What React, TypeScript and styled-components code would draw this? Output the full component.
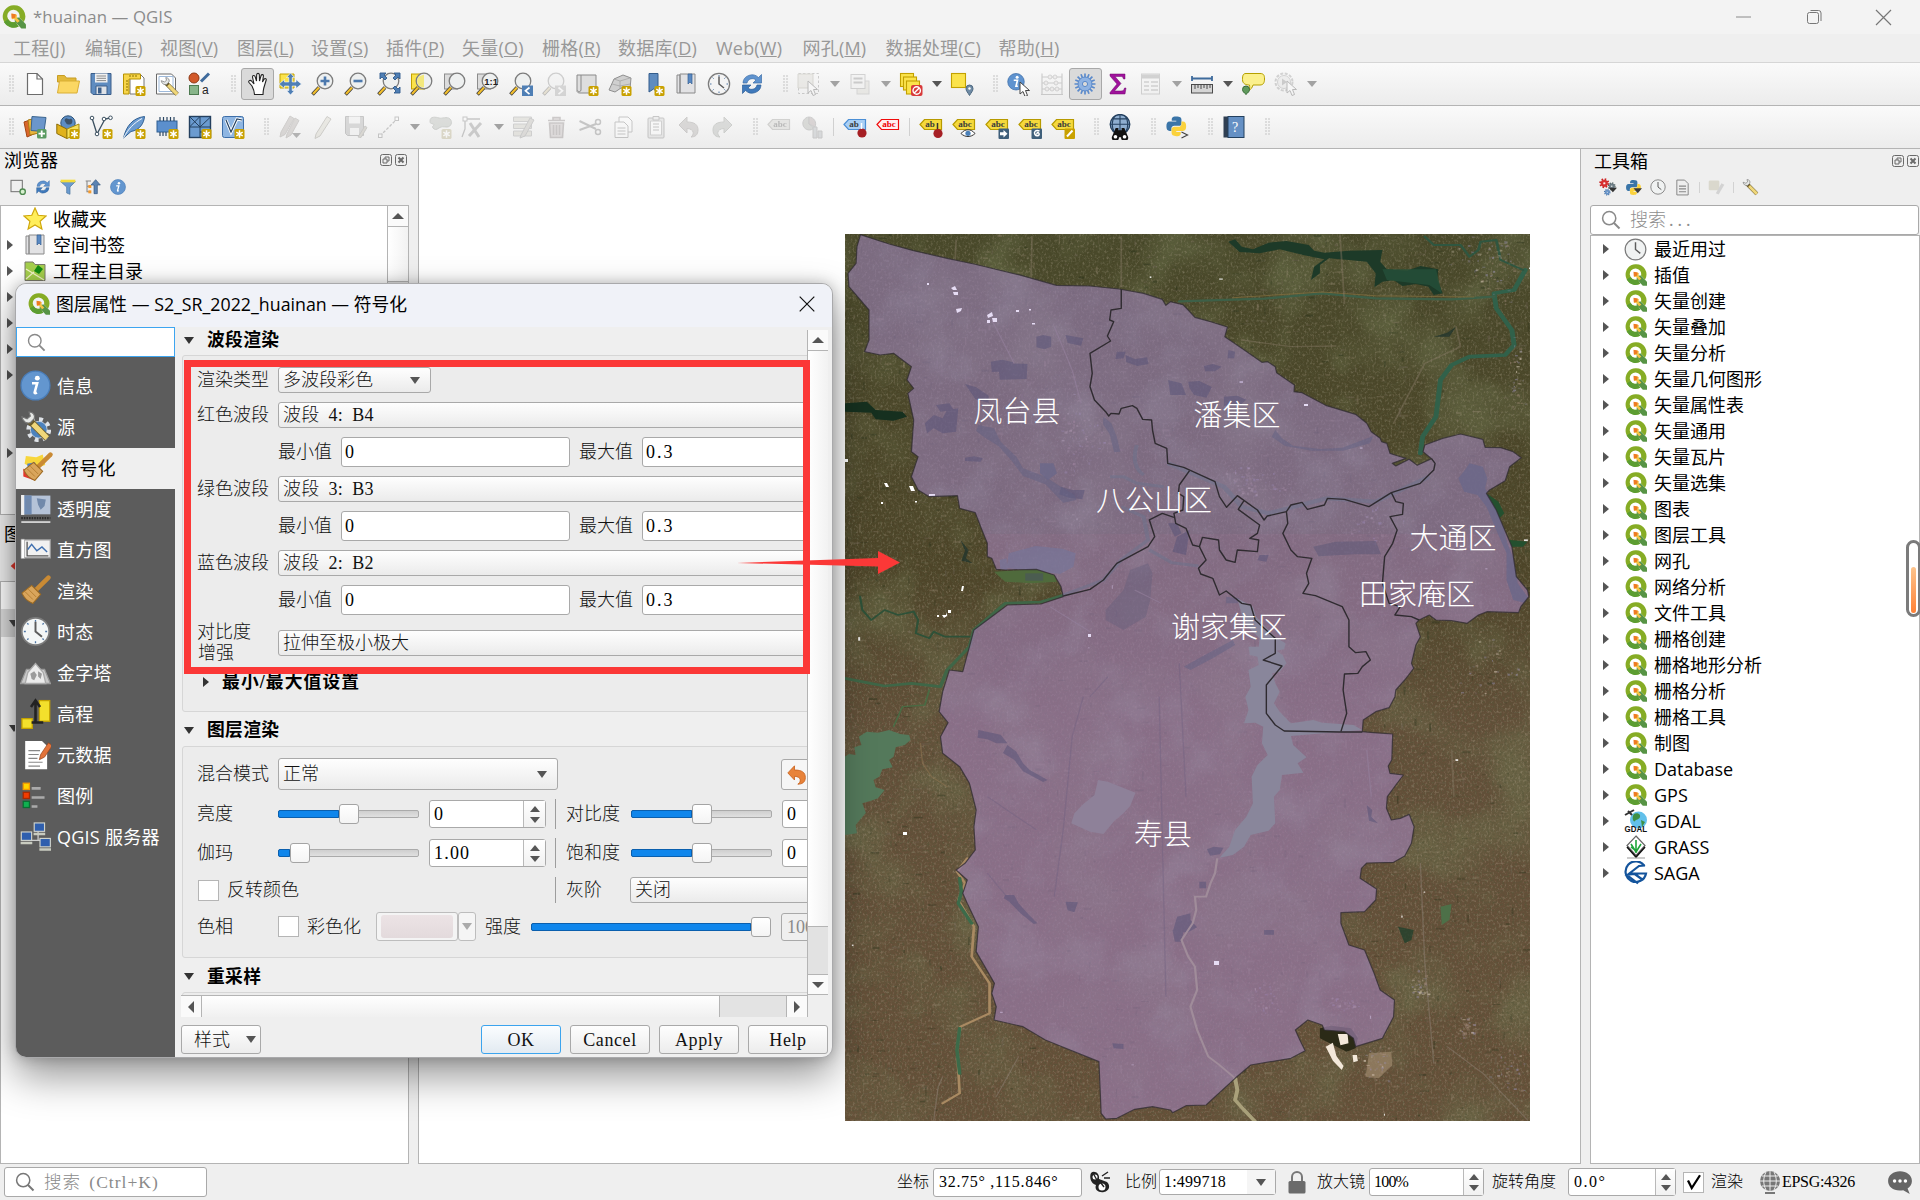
import React from 'react';
import styled, { createGlobalStyle } from 'styled-components';

const SANS = '"Open Sans", "Noto Sans CJK SC", sans-serif';
const SERIF = '"Liberation Serif", "Noto Sans CJK SC", serif';

const Global = createGlobalStyle`
  * { box-sizing: border-box; }
  html, body { margin: 0; padding: 0; }
  body { width: 1920px; height: 1200px; overflow: hidden; background: #efefef; }
`;

/* ---------- shell ---------- */
const Window = styled.div`
  position: relative; width: 1920px; height: 1200px; overflow: hidden;
  display: flex; flex-direction: column; background: #efefef;
  font: 18px/26px ${SANS}; color: #000; white-space: nowrap;
`;
const TitleBar = styled.header`
  height: 34px; flex: none; display: flex; align-items: center; gap: 6px; padding-left: 1px;
  background: #f3f3f3; color: #8b8b8b; font-size: 16.8px;
`;
const TitleText = styled.span`flex: 1; letter-spacing: 0.1px;`;
const WinButtons = styled.div`display: flex; gap: 48px; padding-right: 25px; svg { display: block; }`;
const MenuBar = styled.nav`
  height: 29px; flex: none; display: flex; align-items: center; padding-left: 13px;
  border-bottom: 1px solid #d6d6d6; background: #efefef; color: #989898; font-size: 18px;
`;
const MenuItem = styled.span<{ $w: number }>`width: ${p => p.$w}px; letter-spacing: 0.2px;`;
const ToolBar = styled.div`
  height: 43px; flex: none; display: flex; align-items: center; padding-right: 10px;
  border-bottom: 1px solid #b4b4b4; background: linear-gradient(#fafafa, #ececec);
`;
const ToolRow = styled.div`display: flex; align-items: center; margin-left: -5.5px;`;
const Slot = styled.div<{ $on?: boolean; $dim?: boolean }>`
  width: 33px; height: 32px; display: flex; align-items: center; justify-content: center;
  border-radius: 3px; border: 1px solid ${p => (p.$on ? '#a8a8a8' : 'transparent')};
  background: ${p => (p.$on ? '#dadada' : 'transparent')};
  svg { display: block; opacity: ${p => (p.$dim ? 0.32 : 1)}; filter: ${p => (p.$dim ? 'grayscale(.7)' : 'none')}; }
`;
const Drop = styled.div<{ $dim?: boolean }>`
  width: 18px; display: flex; justify-content: center;
  &::after { content: ''; border: 5.5px solid transparent; border-top: 6px solid ${p => (p.$dim ? '#a2a2a2' : '#555')}; border-bottom: 0; }
`;
const Grip = styled.div`
  width: 24px; padding-left: 14px;
  &::after { content: ''; display: block; width: 5px; height: 18px;
    background: radial-gradient(circle at 1px 1px, #cfcfcf 0.6px, transparent 0.9px) 0 0 / 3px 3px; }
`;
const Sep = styled.div`width: 10px; display: flex; justify-content: center; &::after { content: ''; width: 1px; height: 18px; background: #d0d0d0; }`;

/* ---------- docks ---------- */
const Main = styled.main`height: 1015px; flex: none; display: flex;`;
const LeftDock = styled.aside`width: 418px; padding-right: 9px; display: flex; flex-direction: column;`;
const Canvas = styled.section`
  width: 1163px; padding: 85px 0 0 426px; background: #fff;
  border-left: 1px solid #b4b4b4; border-right: 1px solid #b4b4b4; border-bottom: 1px solid #b4b4b4;
`;
const RightDock = styled.aside`flex: 1; padding-left: 9px; display: flex; flex-direction: column;`;
const DockTitle = styled.div<{ $h?: number; $pl?: number; $pr?: number }>`
  height: ${p => p.$h ?? 24}px; display: flex; align-items: center; justify-content: space-between;
  padding: 0 ${p => p.$pr ?? 1}px 0 ${p => p.$pl ?? 4}px; svg { display: block; }
`;
const DockTools = styled.div<{ $pl: number; $h: number; $gap?: number }>`
  height: ${p => p.$h}px; display: flex; align-items: center; gap: ${p => p.$gap ?? 9}px; padding: 0 0 3px ${p => p.$pl}px; svg { display: block; }
`;
const Thin = styled.i`width: 1px; height: 11px; background: #d2d2d2;`;
const BrowserTree = styled.div`
  height: 310px; flex: none; display: flex; background: #fff; border: 1px solid #b4b4b4;
`;
const LayerTree = styled.div`flex: 1; background: #fff; border: 1px solid #b4b4b4; padding-top: 27px;`;
const LayerRow = styled.div<{ $sel?: boolean; $mt?: number }>`
  height: 28px; margin-top: ${p => p.$mt ?? 0}px; display: flex; align-items: center; padding-left: 8px; background: ${p => (p.$sel ? '#dcdcdc' : 'none')};
`;
const Rows = styled.div`flex: 1;`;
const TreeRow = styled.div<{ $pl: number }>`
  height: 26px; display: grid; align-items: center; padding-left: ${p => p.$pl}px;
  grid-template-columns: 16px 30px 1fr; svg { display: block; }
`;
const ToolTreeRow = styled(TreeRow)`grid-template-columns: 15px 24px 1fr; column-gap: 6px;`;
const Tri = styled.i<{ $down?: boolean; $c?: string }>`
  display: block; width: 0; height: 0; border: 5.5px solid transparent;
  ${p => (p.$down ? `border-top: 7px solid ${p.$c ?? '#444'}; border-bottom: 0;` : `border-left: 6px solid ${p.$c ?? '#555'}; border-right: 0;`)}
`;
const ToolSearch = styled.div`
  height: 30px; flex: none; margin-right: 1px; display: flex; align-items: center; gap: 9px; padding: 0 0 1px 10px; color: #8e8e8e;
  border: 1px solid #a9a9a9; border-radius: 3px; background: #fff; font-weight: 300; font-family: ${SERIF}; svg { display: block; }
`;
const ToolTree = styled.div`flex: 1; background: #fff; border: 1px solid #b4b4b4;`;
const Meter = styled.div`
  position: absolute; left: 1906px; top: 540px; width: 15px; height: 77px; border: 3px solid #7b7b7b; border-radius: 8px;
  background: #fff; display: flex; justify-content: center; align-items: flex-end; padding-bottom: 1px;
  &::after { content: ''; width: 5px; height: 46px; border-radius: 3px; background: linear-gradient(#fdc48c, #ff8136); }
`;

/* ---------- shared scroll bars ---------- */
const VBar = styled.div<{ $w: number }>`
  width: ${p => p.$w}px; flex: none; display: flex; flex-direction: column; border-left: 1px solid #b4b4b4; background: #e2e2e2;
`;
const BarEnd = styled.div<{ $h?: number; $w?: number; $dir: 'up' | 'down' | 'left' | 'right' }>`
  height: ${p => p.$h ?? 21}px; width: ${p => (p.$w ? p.$w + 'px' : 'auto')}; flex: none; display: flex; align-items: center; justify-content: center; background: #fafafa;
  ${p => p.$dir === 'up' && 'border-bottom: 1px solid #b4b4b4;'}
  ${p => p.$dir === 'down' && 'border-top: 1px solid #b4b4b4; border-bottom: 1px solid #b4b4b4;'}
  ${p => p.$dir === 'left' && 'border-right: 1px solid #b4b4b4;'}
  ${p => p.$dir === 'right' && 'border-left: 1px solid #b4b4b4; border-right: 1px solid #b4b4b4;'}
  &::after { content: ''; border: 6px solid transparent;
    ${p => p.$dir === 'up' && 'border-top: 0; border-bottom-color: #555;'}
    ${p => p.$dir === 'down' && 'border-bottom: 0; border-top-color: #555;'}
    ${p => p.$dir === 'left' && 'border-left: 0; border-right-color: #555;'}
    ${p => p.$dir === 'right' && 'border-right: 0; border-left-color: #555;'} }
`;
const VThumb = styled.div<{ $h: number }>`height: ${p => p.$h}px; background: linear-gradient(90deg, #fff, #f2f2f2); border-bottom: 1px solid #b4b4b4;`;

/* ---------- dialog ---------- */
const Dialog = styled.div`
  position: absolute; left: 15px; top: 283px; width: 818px; height: 775px; border: 1px solid #a9a9ab; border-radius: 11px;
  overflow: hidden; background: #efefef; box-shadow: 0 18px 40px rgba(0,0,0,.42), 0 0 14px rgba(0,0,0,.22);
  display: flex; flex-direction: column;
`;
const DlgTitle = styled.div`
  height: 43px; flex: none; display: flex; align-items: center; padding: 0 17px 3px 11px; gap: 5px; background: #f0f2f8;
  svg { display: block; } span { flex: 1; font-size: 17.8px; padding-bottom: 1px; }
`;
const DlgBody = styled.div`flex: 1; display: flex; min-height: 0;`;
const Side = styled.div`width: 159px; flex: none; background: #5c5c5c; color: #fff;`;
const SideSearch = styled.div`height: 30px; border: 1px solid #3da5f0; background: #fff; padding: 5px 0 0 10px; margin-bottom: 9px; svg { display: block; }`;
const SideItem = styled.div<{ $sel?: boolean }>`
  height: 41px; display: flex; align-items: center; gap: ${p => (p.$sel ? 8 : 6)}px; padding: 0 0 2px ${p => (p.$sel ? 6 : 4)}px;
  background: ${p => (p.$sel ? '#efefef' : 'transparent')}; color: ${p => (p.$sel ? '#000' : '#fff')}; svg { display: block; }
  font-size: 18px; letter-spacing: 0.25px;
`;
const Right = styled.div`flex: 1; min-width: 0; display: flex; flex-direction: column; padding: 3px 4px 0 6px; font-family: ${SERIF}; font-weight: 300; color: #111;`;
const ScrollRow = styled.div`height: 665px; flex: none; display: flex;`;
const Content = styled.div`flex: 1; overflow: hidden; margin-top: -3px;`;
const Head = styled.div<{ $h: number; $pt?: number; $pb?: number; $pl?: number; $ls?: number }>`
  height: ${p => p.$h}px; padding: ${p => p.$pt ?? 0}px 0 ${p => p.$pb ?? 0}px ${p => p.$pl ?? 3}px; display: flex; align-items: center; gap: 13px;
  font-weight: 700; font-size: 17.8px; letter-spacing: ${p => p.$ls ?? 0.3}px; color: #000;
`;
const Group = styled.div<{ $h: number; $pt: number }>`
  width: 900px; height: ${p => p.$h}px; margin-left: 1px; padding: ${p => p.$pt}px 0 0 15px; border: 1px solid #d6d6d6; border-radius: 3px; background: #ececec;
`;
const Line = styled.div<{ $h: number; $mt?: number }>`
  height: ${p => p.$h}px; margin-top: ${p => p.$mt ?? 0}px; display: flex; align-items: center;
`;
const Label = styled.span<{ $w: number; $pl?: number; $two?: boolean }>`
  width: ${p => p.$w}px; flex: none; padding-left: ${p => p.$pl ?? 0}px; text-indent: -1px; line-height: ${p => (p.$two ? 21 : 26)}px; white-space: ${p => (p.$two ? 'pre' : 'nowrap')};
`;
const Combo = styled.div<{ $w: number; $h?: number }>`
  width: ${p => p.$w}px; height: ${p => p.$h ?? 26}px; flex: none; display: flex; align-items: center; justify-content: space-between; padding: 0 10px 0 4px;
  border: 1px solid #a9a9a9; border-radius: 3px; background: linear-gradient(#fefefe, #ebebeb);
`;
const BandText = styled.span`letter-spacing: 0.2px; word-spacing: 4.5px;`;
const Input = styled.div<{ $w: number; $h?: number; $dis?: boolean; $ls?: number; $pl?: number }>`
  width: ${p => p.$w}px; height: ${p => p.$h ?? 30}px; flex: none; display: flex; align-items: center; padding-left: ${p => p.$pl ?? 3}px; letter-spacing: ${p => p.$ls ?? 0}px;
  border: 1px solid #a9a9a9; border-radius: 3px; background: ${p => (p.$dis ? '#efefef' : '#fff')}; color: ${p => (p.$dis ? '#8a8a8a' : '#000')}; font-weight: 400;
`;
const SpinBtns = styled.div<{ $w?: number }>`
  width: ${p => p.$w ?? 22}px; height: 100%; margin-left: auto; display: flex; flex-direction: column; align-items: center; justify-content: center; gap: 5px;
  border-left: 1px solid #b9b9b9; background: linear-gradient(#fff, #f1f1f1);
  &::before { content: ''; border: 5.5px solid transparent; border-top: 0; border-bottom: 6px solid #555; }
  &::after { content: ''; border: 5.5px solid transparent; border-bottom: 0; border-top: 6px solid #555; }
`;
const Track = styled.div<{ $w: number }>`
  width: ${p => p.$w}px; height: 8px; flex: none; border: 1px solid #aaa; border-radius: 2px; background: linear-gradient(#cfcfcf, #e0e0e0); display: flex; align-items: center;
`;
const Fill = styled.div<{ $w: number }>`width: ${p => p.$w}px; height: 8px; flex: none; margin-left: -1px; background: #0f86ec; border: 1px solid #0a5fae; border-radius: 2px 0 0 2px;`;
const Knob = styled.div`width: 20px; height: 20px; flex: none; border: 1px solid #a4a4a4; border-radius: 3px; background: linear-gradient(#fff, #f4f4f4);`;
const VLine = styled.div<{ $h: number; $ml: number }>`width: 1px; height: ${p => p.$h}px; margin: 0 11px 0 ${p => p.$ml}px; background: #9d9d9d; flex: none;`;
const Check = styled.div`width: 21px; height: 21px; flex: none; border: 1px solid #b5b5b5; background: #fff; display: flex; align-items: center; justify-content: center;`;
const ColorBtn = styled.div`width: 82px; height: 29px; flex: none; padding: 2px 4px; border: 1px solid #bdbdbd; border-radius: 3px; background: #f4f4f4; &::after { content: ''; display: block; height: 23px; border-radius: 3px; background: linear-gradient(#ece3e5, #e3dadc); }`;
const ColorDrop = styled.div`width: 18px; height: 29px; flex: none; border: 1px solid #bdbdbd; border-radius: 3px; background: #f5f5f5; display: flex; align-items: center; justify-content: center;`;
const HBar = styled.div`height: 22px; width: 627px; flex: none; display: flex; border-top: 1px solid #b4b4b4; background: #e3e3e3;`;
const HThumb = styled.div`width: 518px; border-right: 1px solid #b4b4b4; background: linear-gradient(#fff, #f0f0f0);`;
const Footer = styled.div`display: flex; gap: 9px; padding-top: 8px;`;
const Btn = styled.div<{ $prim?: boolean; $first?: boolean }>`
  width: 80px; height: 29px; flex: none; display: flex; align-items: center; justify-content: ${p => (p.$first ? 'space-between' : 'center')};
  padding: ${p => (p.$first ? '0 4px 0 12px' : 0)}; font-weight: ${p => (p.$first ? 300 : 400)};
  letter-spacing: ${p => (p.$first ? 0 : 0.6)}px; margin-right: ${p => (p.$first ? 211 : 0)}px;
  border: 1px solid ${p => (p.$prim ? '#3ca4ee' : '#a9a9a9')}; border-radius: 3px; background: ${p => (p.$prim ? 'linear-gradient(#fbfdff, #e2eaf1)' : 'linear-gradient(#fefefe, #ececec)')};
`;
const UndoBtn = styled.div`width: 60px; height: 31px; flex: none; padding: 5px; border: 1px solid #a9a9a9; border-radius: 3px; background: #f6f6f6; svg { display: block; }`;

/* ---------- annotation ---------- */
const RedFrame = styled.div`position: absolute; left: 184px; top: 360px; width: 626px; height: 314px; border: 7px solid #fb3837;`;
const RedArrow = styled.svg`position: absolute; left: 737px; top: 551px; display: block;`;

/* ---------- status ---------- */
const Status = styled.footer`flex: 1; display: flex; align-items: center; padding: 0 6px 0 4px; font: 300 16px/24px ${SERIF}; svg { display: block; }`;
const Locator = styled.div`width: 203px; height: 30px; margin-right: 690px; padding-left: 10px; display: flex; align-items: center; gap: 9px; font-size: 17.5px; color: #8a8a8a; border: 1px solid #a9a9a9; border-radius: 3px; background: #fff; letter-spacing: 1px; word-spacing: 3px;`;
const SText = styled.span<{ $w: number }>`width: ${p => p.$w}px; flex: none;`;
const SIcon = styled.span<{ $w: number }>`width: ${p => p.$w}px; flex: none; display: flex; justify-content: center;`;
const SpinCombo = styled.div`width: 28px; height: 100%; margin-left: auto; display: flex; align-items: center; justify-content: center; background: #f5f5f5;`;
const Code = styled.span`letter-spacing: -0.3px; font-weight: 400;`;
const Dots = styled.span`letter-spacing: 4px; margin-left: -6px;`;
const BarGap = styled.div`flex: 1;`;

/* ---------- icons ---------- */
const S = ({ s = 24, b = 24, children }: { s?: number; b?: number; children: React.ReactNode }) => (
  <svg width={s} height={s} viewBox={`0 0 ${b} ${b}`} fill="none">{children}</svg>
);
const QLogo = ({ s = 24 }: { s?: number }) => (
  <S s={s}>
    <path d="M11.500 1.200a10.300 10.300 0 1 0 4.800 19.600l-3-4.300A5.700 5.700 0 1 1 17 12.500l4 4.200A10.300 10.300 0 0 0 11.500 1.200z" fill="#86ac25" />
    <path d="M2.600 16.500a10.300 10.300 0 0 0 13.700 4.300l-3-4.300A5.700 5.700 0 0 1 6.500 14z" fill="#5c9d31" />
    <path d="M13 12.800l3.800-.4 6.200 6.400v3.900h-4.200l-6.200-6.700z" fill="#579445" />
    <path d="M10 9l4.800 1-.3 2.800 2.800 3-2.200 1.400-3-3.400-2 .3z" fill="#f6c345" />
    <path d="M9.500 8.800l4.200.6-.6 3.400-3.300.6z" fill="#ee7a22" />
  </S>
);
const Star = () => (<g><rect x="13.500" y="14" width="10" height="10" rx="1.600" fill="#c9a100" /><path d="M18.500 15.300v7.400M15.300 17.100l6.400 3.800M21.700 17.100l-6.400 3.800" stroke="#fff" strokeWidth="1.500" /></g>);
const Mag = ({ children }: { children?: React.ReactNode }) => (
  <g><path d="M8 15.500L1.500 22.500" stroke="#3a3a3a" strokeWidth="3.600" /><path d="M8 15.500L2 22" stroke="#f2be2c" strokeWidth="2.200" />
    <circle cx="14" cy="9" r="7.800" fill="#eef0f0" stroke="#7c7c7c" strokeWidth="1.300" />{children}</g>
);
const Clock = ({ s = 24, w = '#f4f4f4' }: { s?: number; w?: string }) => (
  <S s={s}><circle cx="12" cy="12" r="10.600" fill={w} stroke="#7b7b7b" strokeWidth="1.300" /><path d="M12 3v1.500M12 19.500V21M3 12h1.500M19.500 12H21M5.600 5.600l1 1M17.400 17.400l1 1M18.400 5.600l-1 1M5.600 18.400l1-1" stroke="#4c74a4" /><path d="M12 4.500V12l5 4" stroke="#5c5c5c" strokeWidth="1.500" /></S>
);
const PlainClock = ({ s = 23 }: { s?: number }) => (
  <S s={s}><circle cx="12" cy="12" r="10.800" fill="#f0f2f2" stroke="#7b7b7b" strokeWidth="1.300" /><path d="M12 4.500V12l5 4" stroke="#5c5c5c" strokeWidth="1.500" /></S>
);
const Refresh = ({ s = 24 }: { s?: number }) => (
  <S s={s}><path d="M3 11a9 8.500 0 0 1 15.500-5.500L21.500 2.500V11H13l3-3a5.500 5.500 0 0 0-9 3z" fill="#5f93cf" stroke="#3d6ea8" strokeWidth=".7" /><path d="M21 13a9 8.500 0 0 1-15.500 5.500L2.500 21.500V13H11l-3 3a5.500 5.500 0 0 0 9-3z" fill="#3f79bb" stroke="#2d5f98" strokeWidth=".7" /></S>
);
const Info = ({ s = 24 }: { s?: number }) => (
  <S s={s}><circle cx="12" cy="12" r="11.200" fill="#6396cf" stroke="#4a7db8" /><circle cx="13.400" cy="6.300" r="1.900" fill="#fff" /><path d="M9.300 10.300h4l-2 7.200q0 1 1.800 0" stroke="#fff" strokeWidth="2" /></S>
);
const Python = ({ s = 24 }: { s?: number }) => (
  <S s={s}><path d="M12 1.500c-5 0-4.800 2-4.800 4.500H12v1H5C2.500 7 1.500 9 1.500 12s1 5 3.500 5h1.800v-2.500c0-2 1.500-3 3-3H15c1.500 0 2.500-1 2.500-2.500V5c0-2.500-1.500-3.500-5.500-3.500z" fill="#3a75a8" /><path d="M12 22.500c5 0 4.800-2 4.800-4.500H12v-1h7c2.500 0 3.500-2 3.500-5s-1-5-3.500-5h-1.500v2.500c0 2-1.500 3-3 3H10c-1.500 0-3 1-3 2.500v4c0 2.500 1.500 3.500 5 3.500z" fill="#fbd23c" /><path d="M12 13h12l-6 7z" fill="#3a3a3a" /></S>
);
const Gear = ({ cx = 12, cy = 12, r: R = 7, c = '#6c9bd2', st = '#4673a8', hole = '#dadada', teeth = 8 }: { cx?: number; cy?: number; r?: number; c?: string; st?: string; hole?: string; teeth?: number }) => {
  const step = (Math.PI * 2 * R * 1.2) / teeth;
  return (<g><circle cx={cx} cy={cy} r={R * 1.2} stroke={st} strokeWidth={R * 0.55} strokeDasharray={`${step * 0.48} ${step * 0.52}`} /><circle cx={cx} cy={cy} r={R} fill={c} stroke={st} strokeWidth=".6" /><circle cx={cx} cy={cy} r={R * 0.36} fill={hole} stroke={st} strokeWidth=".6" /></g>);
};
const Search = ({ s = 20, c = '#8a8a8a' }: { s?: number; c?: string }) => (<S s={s} b={20}><circle cx="8.200" cy="8.200" r="6.600" stroke={c} strokeWidth="1.500" /><path d="M13 13l5.500 5.500" stroke={c} strokeWidth="2" /></S>);
const Tag = ({ f = '#f5d93c', st = '#b79a00', t = 'abc', tc = '#3b3b3b', children }: { f?: string; st?: string; t?: string; tc?: string; children?: React.ReactNode }) => (
  <S><path d="M1 9.500L5.500 4.500H22.500V14.500H5.500z" fill={f} stroke={st} strokeWidth="1.200" /><text x="6.200" y="12.300" fontFamily="Liberation Serif, serif" fontWeight="700" fontSize="9" fill={tc}>{t}</text>{children}</S>
);
const Pointer = ({ x = 11, y = 9 }: { x?: number; y?: number }) => (<path transform={`translate(${x} ${y})`} d="M0 0v12l3-2.500 2 5 2.500-1-2-5h4z" fill="#fff" stroke="#444" strokeWidth="1" />);
const Broom = () => (<g><path d="M22 2l-9 9" stroke="#c98a34" strokeWidth="3.500" strokeLinecap="round" /><path d="M9 8l7 7-6 7C6 20.500 3 17.500 1.500 14z" fill="#d9a55c" stroke="#9c6a22" strokeWidth=".8" /><path d="M4 13l6 6M6.500 11l6 6" stroke="#b27c30" strokeWidth=".7" /></g>);
const Wrench = () => (<g><path d="M7 7l14 14" stroke="#6a5a2a" strokeWidth="5.400" /><path d="M10 10l11 11" stroke="#f0d77a" strokeWidth="4" /><path d="M1.500 4.500C2 8 5 10 8 9l3-3C12 3 10 .8 7 .8L8 4 5.500 6z" fill="#e6e8e6" stroke="#777" strokeWidth=".9" /></g>);
const Book = () => (<g><path d="M3 3h3v18H3zM6 2h15v19H6z" fill="#e2e2e4" stroke="#8a8a8a" /><path d="M14 2h4v10l-2-2-2 2z" fill="#5a89c2" stroke="#335f94" strokeWidth=".7" /></g>);
const Sq = ({ x, y, w = 13 }: { x: number; y: number; w?: number }) => <rect x={x} y={y} width={w} height={w} fill="#fbe34b" stroke="#c3a100" strokeWidth="1.100" />;

const I: Record<string, React.ReactNode> = {
  new: <S><path d="M4.500 1.500H14l5.500 5.500v15.500h-15z" fill="#fff" stroke="#6c6c6c" strokeWidth="1.200" /><path d="M14 1.500V7h5.500" stroke="#6c6c6c" strokeWidth="1.200" /></S>,
  open: <S><path d="M1.500 3.500h7l2 2.500H20v4H1.500z" fill="#e2b93a" stroke="#c79d24" /><path d="M3.500 9h20l-2.500 12H1.500z" fill="#fbd763" stroke="#d9ae35" /></S>,
  save: <S><path d="M2 1.500h20v21H4L2 20.500z" fill="#5f8cc0" stroke="#3c5f8a" /><path d="M6 1.500h12.500v9H6z" fill="#f1f1f1" /><path d="M7.500 4h9.500M7.500 6.300h9.500M7.500 8.600h9.500" stroke="#8a8a8a" /><path d="M7 14h11v8.500H7z" fill="#dfe3e8" stroke="#3c5f8a" /><path d="M9 15.500h3.500v6H9z" fill="#3c5f8a" /></S>,
  layout: <S><path d="M8 2h10l4 4v16H8z" fill="#fff" stroke="#777" /><path d="M1.500 2h17v5H7v15H1.500z" fill="#f7d54a" stroke="#b79200" /><path d="M4 9h2M4 12h2M4 15h2M4 18h2M8 3v2M11 3v2M14 3v2" stroke="#8b7000" /><Star /></S>,
  layman: <S><path d="M1.500 2h15l4 4v16h-19z" fill="#fff" stroke="#6a6a6a" /><path d="M4 4.500h14v15H4z" stroke="#9db9da" /><g transform="translate(5 5) scale(.82)"><Wrench /></g></S>,
  style: <S><circle cx="6" cy="6" r="5" fill="#d2592a" stroke="#8e3815" /><path d="M13 9.500L21 1.500" stroke="#3f6b9c" strokeWidth="3" /><rect x="1.500" y="13.500" width="9" height="9" fill="#88b58a" stroke="#4d7a50" /><text x="14" y="21.500" fontFamily="Liberation Sans, sans-serif" fontSize="12" fill="#222">a</text></S>,
  hand: <S><path d="M7 14L4 10.500c-1-1.500 1-3 2.500-1.500L9 12 7.500 5c0-1.800 2.200-2 2.600-.4L11.500 9l.2-6.500c.3-1.600 2.400-1.500 2.600 0L14.500 9l1.600-5.500c.6-1.500 2.500-1 2.300.6L17.500 10l1.700-3c1-1 2.400-.3 2 1l-2.400 8c-.5 2-.8 3-.8 6.500H9.500c0-3-1-5.500-2.500-8.500z" fill="#fff" stroke="#222" strokeWidth="1.100" /></S>,
  pan: <S><path d="M2 2h14v14H2z" fill="#fbe34b" stroke="#c3a100" /><path d="M12.500 1l4 4.500h-2.300V10H18V7.500l5.500 4.500-5.500 4.500V14h-3.800v4.500h2.300L12.500 23l-4-4.500h2.300V14H6.500v2.500L1 12l5.500-4.500V10h4.300V5.500H8.500z" fill="#4f7fb5" stroke="#fff" strokeWidth=".6" /></S>,
  zin: <S><Mag><path d="M14 4.500v9M9.500 9h9" stroke="#4c79ae" strokeWidth="2.600" /></Mag></S>,
  zout: <S><Mag><path d="M9.500 9h9" stroke="#4c79ae" strokeWidth="2.600" /></Mag></S>,
  zfull: <S><Mag /><path d="M3 1h6L7 3l3 3-2 2-3-3-2 2zM23 1v6l-2-2-3 3-2-2 3-3-2-2zM23 21h-6l2-2-3-3 2-2 3 3 2-2z" fill="#4f7fb5" stroke="#2f5a8c" strokeWidth=".9" /></S>,
  zsel: <S><rect x="1.500" y="2" width="13" height="15" fill="#fbe34b" stroke="#c3a100" /><Mag><path d="M14 2.500v13a6.500 6.500 0 0 1-5-11z" fill="#f3e87c" /></Mag></S>,
  zlay: <S><rect x="1.500" y="2" width="13" height="15" fill="#dcdcdc" stroke="#8c8c8c" /><Mag /></S>,
  znat: <S><rect x="1.500" y="2" width="13" height="15" fill="#dcdcdc" stroke="#8c8c8c" /><Mag><text x="8.300" y="12.500" fontFamily="Liberation Sans, sans-serif" fontWeight="700" fontSize="9.500" fill="#222">1:1</text></Mag></S>,
  zlast: <S><Mag /><rect x="13" y="13.500" width="11" height="10.500" fill="#4f7fb5" /><path d="M20.500 15.500l-4 3.300 4 3.300" stroke="#fff" strokeWidth="1.700" /></S>,
  znext: <S><Mag /><rect x="13" y="13.500" width="11" height="10.500" fill="#9a9a9a" /><path d="M16.500 15.500l4 3.300-4 3.300" stroke="#fff" strokeWidth="1.700" /></S>,
  view: <S><path d="M2 3h19v18H5c-2 0-3-1-3-2z" fill="#dedede" stroke="#8a8a8a" /><path d="M6 3v15c0 2-3 2-3.500.5" stroke="#8a8a8a" /><Star /></S>,
  view3: <S><path d="M1 18L6 7l9-4 8 3-1 11-9-1-6 4z" fill="#cfcfcf" stroke="#8f8f8f" /><path d="M6 7l6 2 10-3M12 9v8M4 12l8 2 10-2" stroke="#a6a6a6" strokeWidth=".8" /><Star /></S>,
  bmk: <S><path d="M8 1.500h9V21l-4.500-4L8 20z" fill="#5f8cc0" stroke="#345d8c" /><Star /></S>,
  bmks: <S><Book /></S>,
  clock: <Clock />,
  refresh: <Refresh />,
  sel: <S><path d="M1.500 1.500h20v20h-20z" stroke="#777" strokeDasharray="2.500 2" /><path d="M1 2h15v14H1z" fill="#d9d4b4" stroke="#a39c6c" /><Pointer /></S>,
  selv: <S><rect x="9" y="9" width="12" height="13" fill="#d9d4b4" stroke="#999" /><rect x="3" y="2.500" width="14" height="14" fill="#eee" stroke="#888" /><path d="M5.500 6.500h9M5.500 10.500h9" stroke="#777" strokeWidth="2" /></S>,
  desel: <S><Sq x={1.500} y={1.500} /><Sq x={4.500} y={5} /><Sq x={7.500} y={9} /><rect x="12" y="13" width="11.500" height="11" rx="2" fill="#d83a3a" /><circle cx="17.700" cy="18.500" r="3.700" stroke="#fff" strokeWidth="1.400" /><path d="M15.200 21l5-5" stroke="#fff" strokeWidth="1.400" /></S>,
  selloc: <S><Sq x={1.500} y={1.500} w={14} /><path d="M19.500 23.500c-2-3.500-3.500-4.500-3.500-7a3.500 3.500 0 0 1 7 0c0 2.500-1.500 3.500-3.500 7z" fill="#6f8ba5" stroke="#4d6880" /><circle cx="19.500" cy="16.500" r="1.200" fill="#fff" /></S>,
  ident: <S><g transform="scale(.75)"><circle cx="12" cy="13" r="11" fill="#5f93cf" stroke="#3d6ea8" /><circle cx="13.500" cy="7" r="2" fill="#fff" /><path d="M9 11h5l-2 8h2.500" stroke="#fff" strokeWidth="2.200" /></g><Pointer x={13} y={10} /></S>,
  abac: <S><path d="M2 1.500v21M22 1.500v21M2 5h20M2 11h20M2 17h20M1 22.500h22" stroke="#777" strokeWidth="1.200" /><g fill="#e9d7d7" stroke="#888"><circle cx="10" cy="5" r="2" /><circle cx="15" cy="5" r="2" /><circle cx="6" cy="11" r="2" /><circle cx="16" cy="11" r="2" /><circle cx="7" cy="17" r="2" /><circle cx="12" cy="17" r="2" /><circle cx="17" cy="17" r="2" /></g></S>,
  gear: <S><path d="M12 1.500v21M1.500 12h21M4.600 4.600l14.800 14.800M19.400 4.600L4.600 19.400M8 2.300l8 19.400M16 2.300L8 21.700M2.300 8l19.400 8M2.300 16l19.400-8" stroke="#5b8acb" strokeWidth="1.700" /><circle cx="12" cy="12" r="7" fill="#8fb3e3" stroke="#5b8acb" /><circle cx="12" cy="12" r="2.600" fill="#dadada" stroke="#5b8acb" /></S>,
  sigma: <S><path d="M4 2h15v5h-1.500c-.5-2-1-2.500-3-2.500H9l6 7-6.500 7.500H15c2.500 0 3-1 3.500-3H20l-1 6H4v-1.500l7-8.500-7-8z" fill="#a0129c" stroke="#6c0a6a" strokeWidth=".5" /></S>,
  table: <S><rect x="2.500" y="2" width="18" height="20" fill="#f2f2f2" stroke="#888" /><path d="M2.500 4.500h18" stroke="#888" strokeWidth="4" /><path d="M5 10h5M12 10h7M5 14h5M12 14h7M5 18h5M12 18h7" stroke="#888" strokeWidth="1.600" /></S>,
  ruler: <S><path d="M2 4v5M22 4v5M2 6.500h20" stroke="#3e6b9c" strokeWidth="1.800" /><rect x="1.500" y="12.500" width="21" height="8.500" fill="#d5d5d5" stroke="#4a4a4a" /><path d="M5 12.500V17M8 12.500V16M11 12.500V17M14 12.500V16M17 12.500V17M20 12.500V16" stroke="#4a4a4a" /></S>,
  tip: <S><path d="M5 1.500h14c4 0 4.500 2 4.500 5.500S22.500 13 19 13h-7c-1 3-2 4.500-4 5 .8-1.500.8-3 .5-5C5 13 1.500 12 1.500 7.500 1.500 3.500 2 1.500 5 1.500z" fill="#fbf08c" stroke="#b5a000" /><path d="M5 22.500c-2-2-3.500-3-3.500-5a3.500 3.500 0 0 1 7 0c0 2-1.500 3-3.500 5z" fill="#5f9a5c" stroke="#3a6b38" /></S>,
  act: <S><circle cx="10" cy="10" r="8.500" stroke="#888" strokeWidth="2" strokeDasharray="3 1.500" /><circle cx="10" cy="10" r="6.500" fill="#ddd" stroke="#888" /><path d="M8 6.500l5 3.500-5 3.500z" fill="#777" /><Pointer x={13} y={9} /></S>,
  dsm: <S><path d="M1 7l9-3 3 14-9 4z" fill="#d9662a" stroke="#a34513" /><path d="M5 5l9-2 2 15-9 2z" fill="#e9b53b" stroke="#a97b14" /><path d="M9 1.500l14 1-2 14-13-1z" fill="#6b96cb" stroke="#3b658f" /><rect x="14" y="14" width="9.500" height="9.500" rx="1.500" fill="#5b9b62" /><path d="M18.700 15.500v6.500M15.500 18.700H22" stroke="#fff" strokeWidth="1.800" /></S>,
  gpkg: <S><circle cx="12" cy="8" r="7.200" fill="#5c8dc4" stroke="#2f5478" /><path d="M9 4c2-2 3 1 5 0s3 2 2 4-5 2-6 0-2-2-1-4z" fill="#3c536b" /><path d="M.8 9l10 5v9.500l-10-5z" fill="#e0b21d" stroke="#8c6c05" /><path d="M11 14l12-5v9l-12 5.500z" fill="#f7e15c" stroke="#a68a0d" /><Star /></S>,
  shp: <S><path d="M3 3l5 16L16 4l5-1" stroke="#3c5060" strokeWidth="1.300" /><g fill="#fff" stroke="#3c5060"><circle cx="3" cy="3" r="1.800" /><circle cx="8" cy="19" r="1.800" /><circle cx="15" cy="4" r="1.800" /><circle cx="21.500" cy="2.800" r="1.800" /></g><Star /></S>,
  feath: <S><path d="M1.500 23C4 12 10 3 22.500 1.500 22 8 18 15 9 16.500z" fill="#6b9bd0" stroke="#2f5f93" /><path d="M1.500 23C6 14 12 8 20 3.500" stroke="#fff" strokeWidth=".9" /><Star /></S>,
  chip: <S><rect x="2" y="6" width="20" height="11" fill="#5b8fcd" stroke="#2f5f93" /><path d="M5 2v4M8.500 2v4M12 2v4M15.500 2v4M19 2v4M5 17v4M8 17v4M11 17v4" stroke="#2c4763" strokeWidth="1.200" /><Star /></S>,
  mesh: <S><rect x="1.500" y="1.500" width="21" height="21" fill="#6b9bd0" stroke="#24405f" strokeWidth="1.400" /><path d="M12 1.500v21M1.500 12h21M1.500 1.500L12 12M12 1.500L1.500 12M12 12l10.500-10M12 17h10" stroke="#24405f" /><Star /></S>,
  virt: <S><rect x="1.500" y="1.500" width="21" height="21" rx="2" fill="#8fb6e2" stroke="#3d6ea8" /><path d="M5 5l5 12 6-13 5 1" stroke="#fff" strokeWidth="3" /><path d="M5 5l5 12 6-13 5 1" stroke="#24405f" strokeWidth="1.200" /><Star /></S>,
  edits: <S><path d="M3 17L12 1l4 2.500L7 19.500 2 22zM9 19l8-16 4 2.500L13 20l-5 3z" fill="#b09a8a" stroke="#8b7a6b" /><path d="M14 18h9l-4.500 5z" fill="#333" /></S>,
  pencil: <S><path d="M5 19L16 1.500l4 2.500L9 21l-5 2.500z" fill="#d8cf9e" stroke="#857c54" /></S>,
  saveE: <S><path d="M1.500 1.500h18v19h-16l-2-2z" fill="#9d9d9d" stroke="#666" /><path d="M5 1.500h11v7H5zM6 13h9v7H6z" fill="#eee" /><path d="M14 22l7-11 2 1.500-6 10z" fill="#b5a06f" stroke="#776" /></S>,
  seg: <S><path d="M3 21L20 4" stroke="#666" strokeWidth="1.300" strokeDasharray="3 1.500" /><rect x="1.500" y="19" width="3.500" height="3.500" fill="#fff" stroke="#666" /><rect x="18" y="2" width="3.500" height="3.500" fill="#fff" stroke="#666" /></S>,
  poly: <S><path d="M2 6c0-5 6-4 9-3s8-2 11 1 1 8-3 8-5-1-8 1-4 2-6 0 3-3 0-4-3-1-3-3z" fill="#9cae97" stroke="#75866f" /><Star /></S>,
  vert: <S><path d="M4 4h15M4 4v10l-3 8" stroke="#666" strokeWidth="1.300" /><rect x="2" y="2" width="4" height="4" fill="#fff" stroke="#666" /><path d="M9 8l9 14M20 8L8 21" stroke="#777" strokeWidth="3" /></S>,
  attr: <S><path d="M1.500 2h18v4.500h-18zM1.500 9h18v4.500h-18zM1.500 16h18v5h-18z" fill="#c9c39a" stroke="#888" /><path d="M9 20L18 3l4 2-9 16-5 2z" fill="#b5aa90" stroke="#777" /></S>,
  trash: <S><path d="M3 5.500h17M8 5V2.500h7V5M4.500 8h14l-1 14.500h-12z" fill="#c9a9a9" stroke="#876a6a" strokeWidth="1.600" /><path d="M8.500 10v10M11.500 10v10M14.500 10v10" stroke="#876a6a" strokeWidth="1.600" /></S>,
  cut: <S><path d="M1.500 6L18 14M1.500 15L18 9" stroke="#666" strokeWidth="2" /><circle cx="20" cy="7" r="2.500" stroke="#666" strokeWidth="1.500" /><circle cx="20" cy="17" r="2.500" stroke="#666" strokeWidth="1.500" /></S>,
  copy: <S><path d="M8 2h9l4 4v11H8z" fill="#fff" stroke="#666" /><path d="M4 7h9l4 4v11.500H4z" fill="#fff" stroke="#666" /><path d="M6.500 13h8M6.500 16h8M6.500 19h8" stroke="#666" /></S>,
  paste: <S><rect x="4" y="3" width="16" height="20" rx="1" fill="#ccc" stroke="#666" /><path d="M6.500 6h11v14h-11z" fill="#fff" stroke="#888" /><path d="M9 1.500h6v3.500H9z" fill="#ddd" stroke="#666" /><path d="M9 9h6M9 12h6M9 15h6" stroke="#666" /></S>,
  undo: <S><path d="M10 2v5c8 0 11 3 11 8s-3 7-7 7c3-2 4-8-4-8.500V18L2 10z" fill="#a89a94" stroke="#85766f" /></S>,
  redo: <S><path d="M14 2v5C6 7 3 10 3 15s3 7 7 7c-3-2-4-8 4-8.500V18l8-8z" fill="#9fa89a" stroke="#788571" /></S>,
  tagd: <Tag f="#c9c6b4" st="#8b8878" />,
  diag: <S><path d="M9 2a6.500 6.500 0 1 0 5 11L9 9z" fill="#99a48c" stroke="#777" /><path d="M9 2a7 7 0 0 1 6 10L9 9z" fill="#b98a8a" stroke="#777" /><path d="M13 12h4v11h-4zM18 16h4v7h-4z" fill="#9ab" stroke="#777" /></S>,
  tagb: <Tag f="#a9cff5" st="#4b8fd6" t="ab"><circle cx="19" cy="18" r="4.600" fill="#a61f24" /><path d="M18.500 14V8" stroke="#fff" strokeWidth="1.500" /></Tag>,
  tagr: <Tag f="#fff0f0" st="#f00c0c" tc="#e00" />,
  tagp: <Tag t="ab"><circle cx="19" cy="18.500" r="4.600" fill="#a61f24" /><path d="M18.500 14V8" stroke="#333" strokeWidth="1.500" /></Tag>,
  tage: <Tag><path d="M9 18.500c4-5 10-5 14 0-4 4-10 4-14 0z" fill="#fff" stroke="#333" /><circle cx="16" cy="18.300" r="2.600" fill="#4b80b8" /></Tag>,
  tagm: <Tag><rect x="13.500" y="13.500" width="10.500" height="10.500" rx="1" fill="#3f5f7a" /><path d="M15 17.300h3.500V15l4 3.700-4 3.800v-2.300H15z" fill="#fff" /></Tag>,
  tago: <Tag><rect x="13.500" y="13.500" width="10.500" height="10.500" rx="1" fill="#3f5f7a" /><path d="M21.500 16c-4-1.500-6 1-4.500 3.500s5 1 4-1-2.500-.5-2 1" stroke="#fff" strokeWidth="1.500" /></Tag>,
  tagc: <Tag><rect x="13.500" y="13.500" width="10.500" height="10.500" rx="1" fill="#c9a100" /><path d="M16 21.500l5.500-6" stroke="#fff" strokeWidth="2" /></Tag>,
  meta: <S s={26}><circle cx="12" cy="9.500" r="9" fill="#8eaed0" stroke="#24405f" strokeWidth="1.300" /><path d="M3 9.500h18M12 .5v18M7 2c-3 5-3 10 0 15M17 2c3 5 3 10 0 15M5 4.500h14" stroke="#24405f" /><path d="M8 13h2.500v2h3v-2H16l3 7a3.300 3.300 0 1 1-6 1.500h-2A3.300 3.300 0 1 1 5 20z" fill="#111" /><circle cx="7.800" cy="21" r="1.700" fill="#fff" /><circle cx="16.200" cy="21" r="1.700" fill="#fff" /></S>,
  py: <S><g transform="scale(.94)"><path d="M12 1.500c-5 0-4.800 2-4.800 4.500H12v1H5C2.500 7 1.500 9 1.500 12s1 5 3.500 5h1.800v-2.500c0-2 1.500-3 3-3H15c1.500 0 2.500-1 2.500-2.500V5c0-2.500-1.500-3.500-5.500-3.500z" fill="#3a75a8" /><path d="M12 22.500c5 0 4.800-2 4.800-4.500H12v-1h7c2.500 0 3.500-2 3.500-5s-1-5-3.500-5h-1.500v2.500c0 2-1.500 3-3 3H10c-1.500 0-3 1-3 2.500v4c0 2.500 1.500 3.500 5 3.500z" fill="#fbd23c" /></g><path d="M16.500 17l6 3-6 3" stroke="#444" strokeWidth="1.200" /></S>,
  help: <S><rect x="1.500" y="1.500" width="5" height="21" fill="#2f3f52" /><rect x="6" y="1.500" width="16" height="21" fill="#6590c4" stroke="#23405f" /><text x="10" y="17" fontFamily="Liberation Serif, serif" fontSize="14" fill="#fff">?</text></S>,
};

type Item = string; // "|" grip, "/" separator, "v" arrow, "." dim arrow, "-x" dim icon, "+x" pressed icon
const bar1: Item[] = '| new open save layout layman style | +hand pan zin zout zfull zsel zlay znat zlast -znext view view3 bmk bmks clock refresh | -sel . -selv . desel v selloc | ident -abac +gear sigma -table . ruler v tip -act .'.split(' ');
const bar2: Item[] = '| dsm gpkg shp feath chip mesh virt | -edits -pencil -saveE -seg . -poly -vert . -attr -trash -cut -copy -paste -undo -redo | -tagd -diag / tagb tagr / tagp tage tagm tago tagc | meta | py | help |'.split(' ');

const Tools = ({ items }: { items: Item[] }) => (
  <ToolBar><ToolRow>
    {items.map((t, i) => {
      if (t === '|') return <Grip key={i} />;
      if (t === '/') return <Sep key={i} />;
      if (t === 'v' || t === '.') return <Drop key={i} $dim={t === '.'} />;
      const on = t[0] === '+', dim = t[0] === '-';
      return <Slot key={i} $on={on} $dim={dim}>{I[on || dim ? t.slice(1) : t]}</Slot>;
    })}
  </ToolRow></ToolBar>
);

const menus: [string, string, number][] = [
  ['工程', 'J', 72], ['编辑', 'E', 75], ['视图', 'V', 77], ['图层', 'L', 74], ['设置', 'S', 75], ['插件', 'P', 76], ['矢量', 'O', 80],
  ['栅格', 'R', 76], ['数据库', 'D', 98], ['Web', 'W', 86.5], ['网孔', 'M', 83], ['数据处理', 'C', 113], ['帮助', 'H', 66],
];

const DockBtns = () => (
  <svg width="28" height="12" viewBox="0 0 28 12" fill="none" stroke="#6a6a6a"><rect x=".5" y=".5" width="11" height="11" rx="2" /><path d="M3 5h4v4H3zM5 5V3h4v4H7" /><rect x="15.500" y=".5" width="11" height="11" rx="2" /><path d="M18.500 3.500l5 5M23.500 3.500l-5 5" strokeWidth="2" /></svg>
);

/* side bar icons */
const sideItems: [string, React.ReactNode][] = [
  ['信息', <Info s={31} />],
  ['源', <S s={31}><Gear cx={14.500} cy={14.500} r={6.500} c="#4c82bd" st="#dfe3e8" hole="#5c5c5c" /><Wrench /></S>],
  ['符号化', <S s={31}><path d="M3 3l8 1 5-2 2 8-9 3-7-4z" fill="#f7d63b" /><path d="M4 9l6-1 2 6-7 2z" fill="#4f7fc9" /><path d="M1 13l7 2 2 7-9-3z" fill="#e2382c" /><Broom /></S>],
  ['透明度', <S s={31}><rect x="2" y="2" width="21.500" height="14.500" fill="#b5c3d8" /><path d="M2 2h7v14.500H2z" fill="#6f8bb3" /><path d="M5 5c3-1 4 1 3 3s1 4-1 5-3-5-2-8zM13 4l7 1-1 5-3 3-2-4z" fill="#7189ab" /><path d="M.8 1.500h2.500V17H.8z" fill="#eee" /><path d="M1 19.500h22.500" stroke="#2b2b2b" strokeWidth="1.800" strokeDasharray="1.200 .8" /><path d="M1 22.500h22.500" stroke="#ddd" strokeWidth="1.300" /></S>],
  ['直方图', <S s={31}><rect x="2" y="4.500" width="21.500" height="14" fill="#f1f1f1" stroke="#999" /><path d="M.8 4h2.700v15H.8z" fill="#fff" stroke="#999" strokeWidth=".5" /><path d="M5.500 6v11H22" stroke="#555" /><path d="M6 12l3-4 4 5 4-3 4 4" stroke="#3f6fae" strokeWidth="1.100" /></S>],
  ['渲染', <S s={31}><Broom /></S>],
  ['时态', <Clock s={31} w="#f3f6f6" />],
  ['金字塔', <S s={31}><path d="M.5 20.500l4.500-11h14l4.500 11z" fill="#c9c9c9" stroke="#999" /><path d="M6 12L12 5l6 7 2 8.500H4z" fill="#ececec" stroke="#aaa" /><path d="M8 13l3-2 2 3-2 4-2-1zM14 11l3 2-1 4-2-2z" fill="#9b9b9b" /></S>],
  ['高程', <S s={31}><rect x="15" y="2" width="8" height="16" fill="#f3e02c" stroke="#c5a300" /><rect x="1.500" y="16" width="8" height="7.500" fill="#f3e02c" stroke="#c5a300" /><path d="M12 19V2M8.500 7L12 2l3.500 5M9 19h9" stroke="#222" strokeWidth="2" /></S>],
  ['元数据', <S s={31}><path d="M4 1.500h13l4 4v18H4z" fill="#fff" /><path d="M6.500 9h9M6.500 12h8M6.500 15h7M6.500 18h11M6.500 21h9" stroke="#888" strokeWidth=".8" /><path d="M15 16l1-4 6-9 3 2-6 9z" fill="#e2733a" stroke="#9c471a" strokeWidth=".6" /></S>],
  ['图例', <S s={31}><rect x="2.500" y="2.500" width="4.800" height="4.800" fill="#ffd400" stroke="#f39a00" /><rect x="2.500" y="9.500" width="4.800" height="4.800" fill="#f23c00" stroke="#a72a00" /><rect x="2.500" y="16.500" width="4.800" height="4.800" fill="#10b050" stroke="#0a6e33" /><path d="M9 6.500h7M9 13.500h10M9 20.500h4.500" stroke="#aaa" strokeWidth="2" /></S>],
  ['QGIS 服务器', <S s={31}><path d="M14 8v7M6 15h12v3" stroke="#ccc" /><g stroke="#cfd3cc" strokeWidth=".9"><rect x="11" y="1.500" width="8" height="6.500" fill="#2f5fae" /><rect x="1" y="8.500" width="8" height="6.500" fill="#2f5fae" /><rect x="15.500" y="13.500" width="8" height="6.500" fill="#2f5fae" /></g><path d="M.5 17h9M15 22h9M10.500 10h9" stroke="#c9ccc0" strokeWidth="2" /></S>],
];

/* ---------- map ---------- */
const rnd = (seed: number) => () => { seed = (seed * 1664525 + 1013904223) % 4294967296; return seed / 4294967296; };
const r = rnd(77);
const specks = Array.from({ length: 2600 }, () => {
  const b = r();
  const vertical = r() > 0.6;
  const long = 1 + r() * (b > 0.9 ? 3 : 8), short = 0.8 + r() * 1.4;
  return { x: r() * 685, y: r() * 887, w: vertical ? short : long, h: vertical ? long : short, c: b > 0.993 ? '#fff' : b > 0.6 ? '#9a8a74' : b > 0.3 ? '#1f2a14' : '#74675a', o: b > 0.993 ? 0.85 : 0.1 + r() * 0.28 };
});
const towns = [[655, 40, 30, 55], [640, 20, 40, 30], [672, 150, 8, 60], [225, 225, 10, 90], [240, 205, 22, 26], [415, 250, 36, 18], [420, 762, 20, 26], [525, 290, 36, 40], [500, 770, 22, 8], [575, 750, 10, 16], [400, 245, 15, 18], [620, 795, 12, 16], [662, 842, 20, 30], [640, 430, 40, 50], [530, 830, 18, 20]];
const townDots = towns.flatMap(([x, y, w, h]) => Array.from({ length: 40 }, () => ({ x: x + (r() + r() - 1) * w, y: y + (r() + r() - 1) * h, w: 0.8 + r() * 2.4, h: 0.8 + r() * 1.6, c: r() > 0.85 ? '#e8d9c8' : r() > 0.5 ? '#9b92b4' : '#a88f80', o: 0.2 + r() * 0.35 })));

const region = 'M46 14L110 42 165 62 240 85 300 102 400 134 485 166 560 168 625 177 680 190 722 208 730 226 740 215 768 224 780 240 795 262 830 275 868 291 862 320 900 355 945 397 958 395 975 410 978 428 1018 465 1017 485 1035 488 1090 527 1155 553 1180 580 1190 605 1210 625 1213 635 1225 640 1232 670 1250 678 1268 685 1237 700 1245 708 1275 688 1293 706 1325 686 1306 665 1310 645 1350 625 1390 612 1440 628 1445 652 1480 653 1508 665 1526 683 1500 710 1490 752 1455 780 1448 790 1470 840 1505 950 1515 1040 1540 1080 1543 1100 1525 1130 1520 1148 1450 1145 1430 1155 1405 1180 1370 1172 1335 1170 1320 1155 1297 1170 1290 1180 1300 1220 1290 1245 1280 1300 1285 1315 1265 1350 1245 1380 1243 1400 1230 1433 1200 1445 1172 1470 1170 1505 1195 1508 1238 1512 1236 1590 1228 1608 1232 1630 1262 1635 1245 1665 1226 1700 1224 1735 1235 1770 1255 1765 1275 1753 1286 1790 1280 1840 1265 1878 1240 1897 1180 1899 1168 1915 1165 1945 1202 1977 1200 2010 1175 2045 1122 2048 1122 2080 1140 2145 1175 2160 1195 2225 1210 2280 1242 2310 1240 2360 1215 2425 1155 2450 1150 2425 1130 2405 1085 2400 1080 2385 1048 2370 1020 2400 1030 2430 1042 2462 1010 2485 920 2505 885 2545 820 2625 775 2627 745 2648 740 2640 700 2630 660 2638 620 2665 595 2667 585 2650 580 2495 460 2430 410 2390 345 2370 350 2330 340 2290 346 2260 305 2165 310 2090 285 2020 275 1990 285 1950 260 1920 280 1900 303 1860 300 1790 305 1740 290 1660 268 1610 230 1570 225 1520 242 1478 222 1445 230 1385 245 1320 275 1325 298 1210 300 1200 375 1125 450 1122 500 1100 495 1070 480 1035 440 1018 370 1020 350 1018 340 985 330 980 330 940 318 900 303 848 268 835 263 797 200 800 175 780 160 740 175 680 160 665 165 570 152 490 165 475 150 450 160 410 120 370 90 375 55 365 65 330 65 240 20 170 18 130 36 100 38 50z';
const borders = [
  'M630 178V235L607 240 604 270 613 275 599 318 606 333 560 370 565 430 560 470 570 510 595 545 602 558 607 550 625 552 630 535 655 527 665 535 678 568 698 570 700 600 706 640 732 655 734 700 770 712 840 755 850 800 866 832 890 797 935 840 950 870 957 858 1000 845 1010 825 1035 817 1047 838 1085 825 1092 805 1130 808 1185 830 1235 788 1300 760 1330 720 1333 700 1325 686',
  'M783 722L760 765 758 790 770 800 768 840 748 850 752 880 775 895 790 945 805 950 820 990 803 1015 808 1032 835 1045 850 1095 865 1083 900 1120 920 1125 930 1170 975 1225 975 1270 948 1290 990 1308 955 1365 955 1450 975 1485 995 1503 1120 1506 1170 1506',
  'M500 1098L560 1078 590 1050 620 1000 690 950 705 920 693 870 722 850 748 862',
  'M905 812L892 838 940 885 935 910 918 925 938 930 935 965 890 960 885 997 865 990 850 960 848 930 812 922 805 950',
  'M1000 845L1003 880 992 910 1010 960 1025 980 1057 985 1045 1030 1050 1060 1037 1090 1065 1097 1125 1130 1140 1170 1140 1250 1155 1268 1178 1265 1188 1290 1170 1310 1160 1330 1130 1332 1127 1380 1135 1450 1122 1505',
  'M1235 788L1245 815 1262 820 1260 853 1232 860 1248 900 1238 940 1220 980 1215 1060 1230 1120 1255 1130 1243 1155 1280 1160 1297 1170',
];
const labels: [string, number, number][] = [['凤台县', 1017, 411], ['潘集区', 1237, 415], ['八公山区', 1154, 500], ['大通区', 1453, 538], ['田家庵区', 1417, 594], ['谢家集区', 1229, 627], ['寿县', 1163, 834]];

const MapSvg = styled.svg`display: block;`;
const MapView = () => (
  <MapSvg width="685" height="887" viewBox="0 0 685 887" fill="none">
    <defs>
      <linearGradient id="land" x1="0" y1="0" x2="0" y2="1"><stop offset="0" stopColor="#484829" /><stop offset=".38" stopColor="#4d4428" /><stop offset=".55" stopColor="#634f39" /><stop offset="1" stopColor="#665039" /></linearGradient>
      <filter id="dark" x="0" y="0" width="100%" height="100%"><feTurbulence type="fractalNoise" baseFrequency=".4 .5" numOctaves="2" seed="4" /><feColorMatrix values="0 0 0 0 .09  0 0 0 0 .09  0 0 0 0 .04  2.200 0 0 0 -.95" /></filter>
      <filter id="lite" x="0" y="0" width="100%" height="100%"><feTurbulence type="fractalNoise" baseFrequency=".5 .35" numOctaves="2" seed="9" /><feColorMatrix values="0 0 0 0 .58  0 0 0 0 .49  0 0 0 0 .38  0 2.200 0 0 -1.100" /></filter>
      <filter id="green" x="0" y="0" width="100%" height="100%"><feTurbulence type="fractalNoise" baseFrequency=".014" numOctaves="5" seed="21" /><feColorMatrix values="0 0 0 0 .17  0 0 0 0 .2  0 0 0 0 .09  0 0 3 0 -1.350" /></filter>
      <filter id="blot" x="0" y="0" width="100%" height="100%"><feTurbulence type="fractalNoise" baseFrequency=".02" numOctaves="5" seed="33" /><feColorMatrix values="0 0 0 0 .37  0 0 0 0 .35  0 0 0 0 .46  0 0 3 0 -1.400" /></filter>
      <clipPath id="rg"><path d={region} transform="translate(-5 -4) scale(.44643 .33333)" /></clipPath>
    </defs>
    <rect width="685" height="887" fill="url(#land)" />
    <rect width="685" height="887" filter="url(#green)" opacity=".45" />
    <rect width="685" height="887" filter="url(#dark)" opacity=".75" />
    <rect width="685" height="887" filter="url(#lite)" opacity=".35" />
    <g>{specks.map((s, i) => <rect key={i} x={s.x} y={s.y} width={s.w} height={s.h} fill={s.c} opacity={s.o} />)}</g>
    <g transform="translate(-5 -4) scale(.44643 .33333)" strokeLinejoin="round" strokeLinecap="round">
      <path d="M870 35L885 28 900 50 925 58 960 38 1000 33 1050 45 1062 62 1085 68 1140 62 1215 60 1210 95 1225 118 1270 122 1300 108 1340 118 1338 150 1350 190 1330 195 1318 170 1290 162 1260 168 1240 150 1215 155 1197 172 1200 130 1180 95 1140 90 1095 85 1075 105 1075 130 1055 150 1062 110 1085 88 1040 76 985 58 940 70 895 66z" fill="#1d3a28" />
      <path d="M1215 118L1335 118 1348 190 1320 165 1225 150z" fill="#26503a" opacity=".8" />
      <path d="M11 520L60 515 80 540 140 545 150 560 120 572 80 568 70 548 11 545z" fill="#16301f" />
      <path d="M270 930l18 30-6 25 15 15-25-8 8-30zM1380 290l-15 30-35 0 30-12z" fill="#22352c" opacity=".8" />
      <path d="M345 1025L440 1018 480 1035 485 1055 430 1060 370 1055z" fill="#4f6a3c" />
      <path d="M415 1030h40v22h-40z" fill="#4b5c50" />
      <path d="M11 1580L20 1572 35 1575 32 1552 48 1545 42 1520 60 1505 85 1508 110 1500 135 1512 155 1515 158 1530 145 1545 125 1552 120 1580 110 1590 118 1612 95 1618 88 1640 75 1650 80 1672 100 1680 85 1705 70 1712 50 1720 58 1748 35 1785 38 1810 11 1815z" fill="#54795b" />
      <path d="M1345 2030L1370 2022 1365 2070 1348 2085z" fill="#4d7048" />
      <path d="M1250 2090l35 10-5 30-15 10z" fill="#22402c" opacity=".8" />
      <path d="M1448 790L1475 815 1488 850 1475 868 1462 830zM1500 930l40 5-10 15-28 0z" fill="#24502f" />
      <path d="M1300 670L1305 620 1335 560 1345 450 1370 405 1410 380 1490 375 1510 345 1505 300 1470 235 1465 190 1510 180 1535 120" stroke="#31614a" strokeWidth="11" />
      <path d="M760 214L950 206 1080 190 1200 205 1370 208 1465 200" stroke="#3d6048" strokeWidth="7" />
      <path d="M880 203L1080 186 1200 197 1420 201" stroke="#86713f" strokeWidth="3" opacity=".7" />
      <path d="M1310 20L1330 45 1390 45 1410 80 1430 60 1435 35 1470 30 1480 90 1530 120" stroke="#2f5640" strokeWidth="6" />
      <path d="M500 1096L450 1116 370 1120 300 1200 290 1250 240 1320 225 1370 160 1360 100 1368 60 1358 11 1345" stroke="#3f6647" strokeWidth="8" />
      <path d="M45 1100L50 1140 70 1170 100 1140 130 1155 165 1145 175 1170 170 1210 200 1225 210 1205 235 1220 290 1220" stroke="#2e5138" strokeWidth="5" />
      <path d="M120 1490L140 1430 190 1425 200 1380" stroke="#4a6b44" strokeWidth="4" />
      <path d="M180 1540L185 1600 205 1640 240 1670" stroke="#8c7350" strokeWidth="3" opacity=".6" />
      <path d="M285 1885L262 1925 280 1960 265 2010 300 2090 295 2180 335 2260 335 2350 270 2390 262 2450 268 2590 230 2620" stroke="#a98a62" strokeWidth="6" />
      <path d="M268 1945L272 1985 265 2020 295 2080M268 2395L262 2460 268 2530" stroke="#3c6b4a" strokeWidth="8" />
      <path d="M885 2545L890 2580 885 2610 905 2640 930 2675" stroke="#a9a07a" strokeWidth="9" />
      <path d="M400 2480L350 2600M1360 2450L1440 2530 1540 2670M1300 1900L1310 2200 1330 2500M210 2670L220 2570 230 2540" stroke="#8a7c70" strokeWidth="3" opacity=".55" />
      <path d="M1380 290L1390 350 1310 400 1240 580M900 330L1010 350 1110 348M430 20L428 150M630 20V170M1120 15L1130 220M1370 1560L1375 1700M260 30L258 90" stroke="#857864" strokeWidth="4" opacity=".45" />
      <path d="M1075 2395l25-8 45 8 15 30-5 30-20 10-60-40z" fill="#2b2a17" />
      <path d="M1115 2412l22 0 2 28-18 6zM1088 2450l16-12 8 40 16 30-4 12-20-28zM1148 2475l10 0 2 18-10 4z" fill="#f3e8da" />
      <path d="M1185 2470l50-5 2 40-30 40-30-5z" fill="#9a8468" opacity=".75" />
    </g>
    <g>{townDots.map((s, i) => <rect key={i} x={s.x} y={s.y} width={s.w} height={s.h} fill={s.c} opacity={s.o} />)}</g>
    <g clipPath="url(#rg)">
      <rect width="685" height="887" fill="#9a80b2" fillOpacity=".64" />
      <rect y="300" width="685" height="587" fill="#a07490" fillOpacity=".14" />
      <rect width="685" height="887" filter="url(#blot)" opacity=".2" />
      <g transform="translate(-5 -4) scale(.44643 .33333)">
        <g fill="#5a5478" opacity=".55">
          <path d="M440 320l15-5 18 5v30l-15 8-18-6zM338 395l25-6 25 8v25l-48 4zM355 405l30-5 35 2-2 45-60 2zM505 315l40 10-5 22-30-8zM280 462l25 10 28 25 0 22-30-12zM640 375l20 12 28-5 3 20-25 6-25-12zM620 365l20 0-5 20-18 2zM735 450l30 10 10 35-35 0zM780 455l25-2 28 18-12 32-28-8-10-20zM815 408l20-6 20 8-15 14-22 0zM860 500l30-3 20 12-15 18-35 0zM870 360l15 5-2 20-15 0zM190 580l20-25 20 10 10-25 25-5-5 70-30 5-20-15-15 15zM215 525l30-5 10 20-30 5zM280 683l20-4 20 6-5 10-35-2zM495 770l25 10 28 0-5 28-30-5-22-10zM735 880l20 0 10 30-15 10zM755 920l28-20-8 75-30-10zM940 975l20 0-5 20-20-4z" />
          <path d="M310 1500l50 14 15 26-25 0-20-12-22-5zM375 1545l20 20 15 35 15 20 40 30-10 6-45-32-20-35-25-20zM370 1995l20 0 10 25 20 30 22 30-8 2-30-32-25-35-12-10zM755 2060l30-10 0 20 15 22-20 15-35 0zM745 2100l25 0-5 35-15 0zM822 1858l15-8 22 3-8 20-22 4zM1180 1725l12 15-2 20 15 20-20-8zM950 2100h22v14h-22zM505 2015l28 2-8 30-15-6zM610 2440l25 2 0 15-22-2zM805 1955h15v20h-15z" />
        </g>
        <path d="M975 600l15 25 25 22 60 10 50-4 70-35-8 22-60 22-70 0-60-14-30-28zM310 585l35 10 15 40 35 45 15 35 50 25 40 35 25 20 5 15-30 8-40-55-50-25-25-45-30-45-30-25-20-20zM590 560l18 20 12 40 8 45-14 2-10-55-15-30z" fill="#626283" opacity=".5" />
        <path d="M358 990l15-5 2 35-16-4zM378 970l60-22 60 8 30 14-5 40-30 22-60-10-60-8z" fill="#74759a" opacity=".65" />
        <path d="M448 700l30 0 8 30-20 20-18-20zM1385 745l15-25 10-20 30 10 10 35-5 30 15 35 25 75 10 55 18 60 5 60 22 40-2 20-30-10-15-60 0-80-20-60-25-80-20-35-30-10z" fill="#6a688a" opacity=".8" />
        <path d="M665 645q-15 60 15 90M605 740l30 0 30 20 60 10M693 960l50 38 60 10M500 1095l90-45 40-60 60-60-10-70-50-30" stroke="#6d738c" strokeWidth="9" opacity=".55" />
        <path d="M735 700L860 770 900 830 960 850 1090 805 1200 815 1320 740" stroke="#70758e" strokeWidth="12" opacity=".55" />
        <path d="M1060 950l50-15 90-2 12 40-60 0-80 6z" fill="#5f5a78" opacity=".55" />
        <path d="M595 1140l40-60 15-60 40-20 10 30-5 80-10 50-50 40-40-30z" fill="#655f7c" opacity=".45" />
        <path d="M770 1310l40-30 70-50 5 15-50 40-50 35zM865 1100l30 5-5 15-25 0zM800 1545" fill="#626283" opacity=".5" />
        <path d="M890 1105L925 1130 932 1160 975 1222 998 1240 995 1258 978 1262 992 1276 1000 1300 985 1325 968 1330 975 1360 985 1385 972 1420 985 1445 1010 1480 1060 1470 1080 1478 1150 1485 1170 1500 1010 1518 1015 1545 1045 1582 1025 1600 1038 1628 990 1635 985 1680 972 1700 975 1780 960 1802 920 1815 905 1850 880 1875 850 1883 872 1850 885 1800 910 1760 925 1720 922 1640 935 1605 958 1575 945 1540 948 1490 930 1478 905 1480 915 1440 908 1400 920 1370 915 1320 938 1305 935 1280 918 1275 915 1250 938 1250 940 1225 905 1180z" fill="#89869b" />
        <path d="M578 1650L600 1655 662 1688 650 1728 635 1750 615 1772 590 1812 560 1805 518 1780 525 1750 545 1722 570 1695z" fill="#8e8199" />
        <path d="M845 1885L840 1930 830 1960 820 2000 795 2000 798 2040 790 2080 765 2130 780 2180 795 2210 800 2280 785 2330 800 2400 825 2480 850 2505 885 2545" stroke="#a08c9a" strokeWidth="5" />
        <path d="M545 1400L520 1520 500 1800 480 2000M715 1400L730 2300M760 1300L775 1700M330 1700L440 1800M330 1930L380 2010M600 1340L560 1400" stroke="#6d6080" strokeWidth="3" opacity=".4" />
        <path d="M480 290L520 420 540 520M1180 1560L1190 1700M340 270L390 400M660 1080L720 1120M470 1130L560 1205" stroke="#94809c" strokeWidth="3" opacity=".6" />
      </g>
      <g fill="#e6dcf4"><path d="M106 54l4-2 2 4h-4zM108 58h5v3h-4zM142 81l5-3 1 4-5 2zM142 86h3v3h-3zM147 84h5v4h-4zM171 76h3v2h-3zM184 75h2v1.500h-2zM111 75l6-1-1 3-4 2zM82 49h2v2h-2zM187 89h3v1.500h-3zM369 727h5v4h-5zM84 260h6v2h-6zM243 400h3v3h-3zM459 170h4v2h-4z" /></g>
    </g>
    <g fill="#fff"><path d="M39 249h3l2 4h-3zM64 252h4l2 5h-4zM36 268h2v2h-2zM70 267h2v1.500h-2zM92 381h2v2h-2zM117 352h2l-1 5h-2zM103 376h3v3h-3zM97 381h4l1-3v4l-3 2zM0 225h3v3H0zM58 598h4v3h-4z" /></g>
    <g transform="translate(-5 -4) scale(.44643 .33333)" stroke="#2f2b30" strokeLinejoin="round">
      <path d={region} vectorEffect="non-scaling-stroke" strokeWidth="1.200" strokeOpacity=".75" />
      {borders.map(d => <path key={d} d={d} vectorEffect="non-scaling-stroke" strokeWidth="1.400" />)}
    </g>
    <g fill="#fff" fontFamily='"Noto Sans CJK SC", sans-serif' fontWeight="300" fontSize="29" textAnchor="middle">
      {labels.map(([t, x, y]) => <text key={t} x={x - 845} y={y - 234 + 10.500}>{t}</text>)}
    </g>
  </MapSvg>
);

/* ---------- pieces of the form ---------- */
const Slider = ({ w, v }: { w: number; v: number }) => <Track $w={w}><Fill $w={v} /><Knob /></Track>;
const Band = ({ name, band }: { name: string; band: string }) => (
  <>
    <Line $h={26} $mt={9}><Label $w={80}>{name}</Label><Combo $w={560}><BandText>{band}</BandText></Combo></Line>
    <Line $h={30} $mt={9}>
      <Label $w={143} $pl={81}>最小值</Label><Input $w={229}>0</Input>
      <Label $w={72} $pl={10}>最大值</Label><Input $w={229} $ls={2}>0.3</Input>
    </Line>
  </>
);

const toolGroups = ['插值', '矢量创建', '矢量叠加', '矢量分析', '矢量几何图形', '矢量属性表', '矢量通用', '矢量瓦片', '矢量选集', '图表', '图层工具', '网孔', '网络分析', '文件工具', '栅格创建', '栅格地形分析', '栅格分析', '栅格工具', '制图', 'Database', 'GPS'];

export default function App() {
  return (
    <Window>
      <Global />
      <TitleBar>
        <QLogo s={26} /><TitleText>*huainan — QGIS</TitleText>
        <WinButtons>
          <S s={22} b={22}><path d="M3 11h15" stroke="#8a8a8a" /></S>
          <S s={22} b={22}><rect x="4.500" y="6.500" width="11" height="11" rx="2" stroke="#777" /><path d="M7.500 4.500h8q2.500 0 2.500 2.500v8" stroke="#777" /></S>
          <S s={22} b={22}><path d="M3 4l15 15M18 4L3 19" stroke="#777" strokeWidth="1.200" /></S>
        </WinButtons>
      </TitleBar>
      <MenuBar>{menus.map(([t, k, w]) => <MenuItem key={t} $w={w}>{t}(<u>{k}</u>)</MenuItem>)}</MenuBar>
      <Tools items={bar1} />
      <Tools items={bar2} />

      <Main>
        <LeftDock>
          <DockTitle $h={22}>浏览器<DockBtns /></DockTitle>
          <DockTools $pl={10} $h={34}>
            <S s={16}><rect x="1.500" y="2" width="17" height="17" stroke="#777" strokeWidth="1.600" /><circle cx="19" cy="19" r="4" fill="#d7f0cf" stroke="#4f8a50" strokeWidth="2" /></S>
            <Refresh s={16} />
            <S s={16}><path d="M1 4h22l-8 8v11l-5-2v-9z" fill="#6b9bd0" stroke="#47749f" /><path d="M1 1h22v4H1z" fill="#f4dc3c" /></S>
            <S s={16}><path d="M3 3v17M1 3h8M3 11h5M3 19h5" stroke="#888" strokeWidth="1.600" /><rect x="5" y="9" width="4.500" height="4.500" fill="#f59a2c" /><rect x="5" y="17" width="4.500" height="4.500" fill="#f59a2c" /><path d="M16 1l7 8h-4.500v13h-5V9H9z" fill="#5b83b3" stroke="#33557d" /></S>
            <Info s={16} />
          </DockTools>
          <BrowserTree>
            <Rows>
              <TreeRow $pl={6}><span /><S><path d="M12 1l3.200 7.300 7.900.7-6 5.300 1.800 7.800L12 18l-6.900 4.100 1.800-7.800-6-5.300 7.900-.7z" fill="#ffee5a" stroke="#cfa70c" strokeWidth="1.200" /></S>收藏夹</TreeRow>
              <TreeRow $pl={6}><Tri /><S><Book /></S>空间书签</TreeRow>
              <TreeRow $pl={6}><Tri /><S><path d="M2 3h8l2 2.500h10v16H2z" fill="#a5cf4c" stroke="#7a7a6a" /><path d="M3 10l18 11M3 20l8-7" stroke="#f3f3c8" strokeWidth="1.200" /><path d="M15 6l5 4-4 5-5-3z" fill="#128a12" /></S>工程主目录</TreeRow>
              {[1, 1, 1, 1, 0, 0, 1].map((on, i) => <TreeRow key={i} $pl={6}>{on ? <Tri /> : <span />}</TreeRow>)}
            </Rows>
            <VBar $w={21}><BarEnd $dir="up" /><VThumb $h={55} /></VBar>
          </BrowserTree>
          <DockTitle $h={38}>图层</DockTitle>
          <DockTools $pl={10} $h={28}><S s={16}><path d="M1 12l10-9 6 8-7 9z" fill="#e2382c" /></S></DockTools>
          <LayerTree><LayerRow $sel><Tri $down /></LayerRow><LayerRow $mt={77}><Tri $down /></LayerRow></LayerTree>
        </LeftDock>

        <Canvas><MapView /></Canvas>

        <RightDock>
          <DockTitle $h={23} $pr={0} $pl={4}>工具箱<DockBtns /></DockTitle>
          <DockTools $pl={9} $h={33} $gap={8}>
            <S s={18}><Gear cx={7} cy={7} r={4.500} c="#d93030" st="#c22" hole="#fff" /><Gear cx={17} cy={11} r={3.600} c="#6f7f8c" st="#566" hole="#fff" /><Gear cx={11} cy={19} r={3} c="#6c9bd2" hole="#fff" /><path d="M13 13h11l-5.500 6z" fill="#333" /></S>
            <Python s={17} />
            <PlainClock s={16} />
            <S s={17}><path d="M4 1.500h11l5 5v16H4z" fill="#eee" stroke="#888" strokeWidth="1.400" /><path d="M7 10h10M7 14h10M7 18h10" stroke="#888" strokeWidth="1.600" /></S>
            <Thin />
            <S s={17}><g opacity=".4"><rect x="1" y="2" width="15" height="14" rx="2" fill="#bbb89c" /><path d="M11 20l8-14 4 2-8 14z" fill="#aaa" /></g></S>
            <Thin />
            <S s={17}><Wrench /></S>
          </DockTools>
          <ToolSearch><Search />搜索<Dots>...</Dots></ToolSearch>
          <ToolTree>
            <ToolTreeRow $pl={12}><Tri /><PlainClock />最近用过</ToolTreeRow>
            {toolGroups.map(g => <ToolTreeRow key={g} $pl={12}><Tri /><QLogo /><span>{g}</span></ToolTreeRow>)}
            <ToolTreeRow $pl={12}><Tri /><S><circle cx="14.500" cy="11" r="8.500" fill="#62c0ea" /><path d="M10 5c3-2 7 0 6 3s-4 2-5 4-4-3-1-7zM17 11l4 2-3 5z" fill="#3e9044" /><path d="M1 6l9-5M4 2l4 4" stroke="#333" strokeWidth="2" /><text x="0.500" y="22.500" fontFamily="Liberation Sans, sans-serif" fontWeight="700" fontSize="9" textLength="22.500" lengthAdjust="spacingAndGlyphs" fill="#111">GDAL</text></S><span>GDAL</span></ToolTreeRow>
            <ToolTreeRow $pl={12}><Tri /><S><path d="M12 1l9 9.500-9 10-9-10z" fill="#fff" stroke="#666" strokeWidth="1.200" /><path d="M3 12l9 10 9-10" stroke="#111" strokeWidth="1.600" /><path d="M12 18V5M12 17L7 9M12 17l5-8M12 16l-5-4" stroke="#1fa53a" strokeWidth="1.600" /><path d="M3 23h18" stroke="#999" /></S><span>GRASS</span></ToolTreeRow>
            <ToolTreeRow $pl={12}><Tri /><S><path d="M20.500 5A10.300 10.300 0 1 0 22 12.500H10l9 6.500M21 4.500l-6 .5L4 13.500l12-1M3 14l11 8.500" stroke="#14549c" strokeWidth="2.200" /></S><span>SAGA</span></ToolTreeRow>
          </ToolTree>
        </RightDock>
      </Main>

      <Status>
        <Locator><Search s={20} c="#777" />搜索 (Ctrl+K)</Locator>
        <SText $w={36}>坐标</SText>
        <Input $w={149} $h={29} $ls={0.7} $pl={5}>32.75° ,115.846°</Input>
        <SIcon $w={35}><S s={24}><path d="M3 3c3-3 9 0 8 6l8 3c4 4 2 9-3 10S6 20 8 15C3 14 1 7 3 3z" fill="#222" /><circle cx="7" cy="7" r="2.500" fill="#fff" /><circle cx="14" cy="17" r="3.500" fill="#fff" /><path d="M10 9l6 8M5 3l5 9M14 6l6-4M16 8h6" stroke="#222" strokeWidth="1.400" /></S></SIcon>
        <SText $w={42}>&nbsp;&nbsp;比例</SText>
        <Input $w={117} $h={26} $ls={0.2} $pl={4}>1:499718<SpinCombo><Tri $down $c="#555" /></SpinCombo></Input>
        <SIcon $w={41}><S s={24}><path d="M7 12V7a5 5 0 0 1 10 0v5" stroke="#777" strokeWidth="2" /><rect x="3.500" y="11" width="17" height="12.500" rx="1.500" fill="#6b6b6b" /></S></SIcon>
        <SText $w={52}>放大镜</SText>
        <Input $w={115} $h={28} $pl={4} $ls={-0.8}>100%<SpinBtns $w={20} /></Input>
        <SText $w={84}>&nbsp;&nbsp;旋转角度</SText>
        <Input $w={108} $h={28} $pl={5} $ls={1.5}>0.0°<SpinBtns $w={20} /></Input>
        <SIcon $w={35}><Check><S s={18}><path d="M4 10l5 10L20 3" stroke="#000" strokeWidth="3" /></S></Check></SIcon>
        <SText $w={47}>渲染</SText>
        <S s={24}><circle cx="12" cy="11" r="10" fill="#777" /><path d="M2 11h20M12 1v20M4 6h16M4 16h16M8 2c-3 6-3 12 0 18M16 2c3 6 3 12 0 18" stroke="#efefef" /><path d="M7 23h10" stroke="#777" strokeWidth="2" /></S>
        <SText $w={105}><Code>EPSG:4326</Code></SText>
        <S s={26}><path d="M12 2c6 0 11 3.500 11 9 0 3-1.500 5-4 7l2 5-6-3.500C7 21 1 17 1 11c0-5.500 5-9 11-9z" fill="#666" /><g fill="#fff"><circle cx="7" cy="11" r="1.600" /><circle cx="12" cy="11" r="1.600" /><circle cx="17" cy="11" r="1.600" /></g></S>
      </Status>

      <Meter />

      <Dialog>
        <DlgTitle><QLogo s={24} /><span>图层属性 — S2_SR_2022_huainan — 符号化</span><S s={16} b={16}><path d="M.7.7l14.600 14.600M15.300.7L.7 15.300" stroke="#111" strokeWidth="1.200" /></S></DlgTitle>
        <DlgBody>
          <Side>
            <SideSearch><Search s={19} /></SideSearch>
            {sideItems.map(([t, ic]) => <SideItem key={t} $sel={t === '符号化'}>{ic}<span>{t}</span></SideItem>)}
          </Side>
          <Right>
            <ScrollRow>
              <Content>
                <Head $h={28} $pb={2}><Tri $down $c="#333" />波段渲染</Head>
                <Group $h={357} $pt={11}>
                  <Line $h={26}><Label $w={80}>渲染类型</Label><Combo $w={153}>多波段彩色<Tri $down $c="#555" /></Combo></Line>
                  <Band name="红色波段" band="波段 4: B4" />
                  <Band name="绿色波段" band="波段 3: B3" />
                  <Band name="蓝色波段" band="波段 2: B2" />
                  <Line $h={44} $mt={6}><Label $w={80} $two>{'对比度\n增强'}</Label><Combo $w={560}>拉伸至极小极大</Combo></Line>
                  <Head $h={32} $pt={2} $pl={5} $ls={1.1}><Tri $c="#333" />最小/最大值设置</Head>
                </Group>
                <Head $h={34} $pt={2}><Tri $down $c="#333" />图层渲染</Head>
                <Group $h={212} $pt={11}>
                  <Line $h={32}><Label $w={80}>混合模式</Label><Combo $w={280} $h={32}>正常<Tri $down $c="#555" /></Combo><Label $w={223} /><UndoBtn><S s={20}><path d="M9 1v5c9 0 13 3 13 9s-4 8-9 8c4-2 5-9-4-9.500V18L1 9.500z" fill="#e8833a" stroke="#c9621d" /></S></UndoBtn></Line>
                  <Line $h={30} $mt={9}>
                    <Label $w={80}>亮度</Label><Slider w={141} v={61} /><Label $w={10} /><Input $w={117} $h={28} $pl={4}>0<SpinBtns /></Input>
                    <VLine $h={30} $ml={9} /><Label $w={64}>对比度</Label><Slider w={141} v={61} /><Label $w={10} /><Input $w={117} $h={28} $pl={4}>0</Input>
                  </Line>
                  <Line $h={30} $mt={9}>
                    <Label $w={80}>伽玛</Label><Slider w={141} v={12} /><Label $w={10} /><Input $w={117} $h={28} $pl={4} $ls={1.2}>1.00<SpinBtns /></Input>
                    <VLine $h={30} $ml={9} /><Label $w={64}>饱和度</Label><Slider w={141} v={61} /><Label $w={10} /><Input $w={117} $h={28} $pl={4}>0</Input>
                  </Line>
                  <Line $h={26} $mt={9}>
                    <Check /><Label $w={336} $pl={9}>反转颜色</Label><VLine $h={26} $ml={0} /><Label $w={63}>灰阶</Label><Combo $w={280}>关闭</Combo>
                  </Line>
                  <Line $h={29} $mt={9}>
                    <Label $w={80}>色相</Label><Check /><Label $w={77} $pl={9}>彩色化</Label><ColorBtn /><ColorDrop><Tri $down $c="#aaa" /></ColorDrop>
                    <Label $w={55} $pl={10}>强度</Label><Slider w={240} v={220} /><Label $w={10} /><Input $w={117} $h={28} $dis $pl={5}>100</Input>
                  </Line>
                </Group>
                <Head $h={34} $pt={3}><Tri $down $c="#333" />重采样</Head>
                <Group $h={40} $pt={0} />
              </Content>
              <VBar $w={21}><BarEnd $dir="up" /><VThumb $h={576} /><BarGap /><BarEnd $dir="down" $h={21} /></VBar>
            </ScrollRow>
            <HBar><BarEnd $dir="left" $w={21} /><HThumb /><BarGap /><BarEnd $dir="right" $w={22} /></HBar>
            <Footer>
              <Btn $first>样式<Tri $down $c="#555" /></Btn>
              <Btn $prim>OK</Btn><Btn>Cancel</Btn><Btn>Apply</Btn><Btn>Help</Btn>
            </Footer>
          </Right>
        </DlgBody>
      </Dialog>

      <RedFrame />
      <RedArrow width="164" height="24" viewBox="0 0 164 24"><path d="M0 12L141 7V0l22 11.500L141 23v-7.500z" fill="#fb3837" /></RedArrow>
    </Window>
  );
}
